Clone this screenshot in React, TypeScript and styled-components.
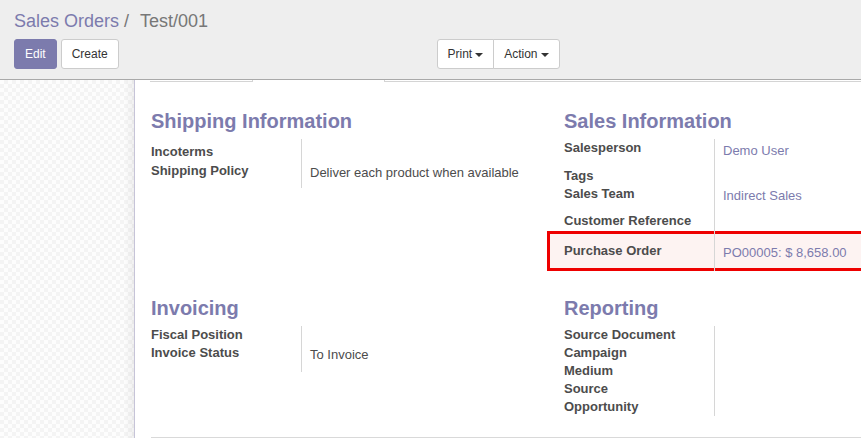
import React from "react";
import styled, { createGlobalStyle } from "styled-components";

const GlobalStyle = createGlobalStyle`
  html, body { margin: 0; padding: 0; }
  body {
    font-family: "Liberation Sans", Arial, Helvetica, sans-serif;
    font-size: 13px;
    color: #4c4c4c;
    background: #ffffff;
    overflow: hidden;
  }
  * { box-sizing: border-box; }
`;

const Page = styled.div`
  width: 861px;
  height: 438px;
  display: flex;
  flex-direction: column;
  overflow: hidden;
`;

const ControlPanel = styled.div`
  background: #eeeeee;
  border-bottom: 1px solid #a9a9a9;
  padding: 8px 0 10px 14px;
`;

const Breadcrumbs = styled.div`
  display: flex;
  align-items: baseline;
  font-size: 18px;
  line-height: 26px;
  white-space: nowrap;
`;

const Crumb = styled.span`
  color: #7c7bad;
`;

const CrumbSep = styled.span`
  color: #777777;
  margin: 0 11px 0 5px;
`;

const CrumbActive = styled.span`
  color: #777777;
`;

const CpBottom = styled.div`
  display: grid;
  grid-template-columns: 1fr 1fr;
  margin-top: 5px;
`;

const ButtonRow = styled.div`
  display: flex;
  gap: 4px;
`;

const Button = styled.button<{ $primary?: boolean }>`
  font-family: inherit;
  font-size: 12px;
  line-height: 18px;
  height: 30px;
  padding: 5px 10px;
  border-radius: 3px;
  border: 1px solid ${(p) => (p.$primary ? "#7c7bad" : "#cccccc")};
  background: ${(p) => (p.$primary ? "#7c7bad" : "#ffffff")};
  color: ${(p) => (p.$primary ? "#ffffff" : "#333333")};
  cursor: pointer;
`;

const ButtonGroup = styled.div`
  display: flex;
  margin-left: -1px;
`;

const GroupButton = styled.button`
  font-family: inherit;
  font-size: 12px;
  line-height: 18px;
  height: 30px;
  padding: 5px 10px;
  border: 1px solid #cccccc;
  background: #ffffff;
  color: #333333;
  display: flex;
  align-items: center;
  gap: 3px;
  &:first-child {
    border-radius: 3px 0 0 3px;
  }
  &:last-child {
    border-radius: 0 3px 3px 0;
    margin-left: -1px;
  }
`;

const Caret = styled.span`
  display: inline-block;
  width: 0;
  height: 0;
  border-top: 4px solid #333333;
  border-left: 4px solid transparent;
  border-right: 4px solid transparent;
  margin-top: 1px;
`;

const Main = styled.div`
  flex: 1;
  display: flex;
  min-height: 0;
`;

const Backdrop = styled.div`
  width: 134px;
  flex: none;
  background-color: #ffffff;
  background-image: repeating-conic-gradient(#f4f4f4 0 25%, #fdfdfd 0 50%);
  background-size: 8px 8px;
  position: relative;
  &::after {
    content: "";
    position: absolute;
    top: 0;
    bottom: 0;
    right: 0;
    width: 10px;
    background: linear-gradient(to right, rgba(0, 0, 0, 0), rgba(0, 0, 0, 0.05));
  }
`;

const Sheet = styled.div`
  flex: 1;
  min-width: 0;
  background: #ffffff;
  border-left: 1px solid #c6c4d8;
  overflow: hidden;
  padding: 0 0 0 16px;
`;

const TopEdge = styled.div`
  display: flex;
  height: 2px;
  margin-left: -1px;
`;

const EdgeSeg = styled.div<{ $w: number; $side: "left" | "right" }>`
  width: ${(p) => p.$w}px;
  flex: ${(p) => (p.$side === "left" ? "1 1 auto" : "none")};
  height: 2px;
  border-bottom: 1px solid #d4d4d4;
  ${(p) => (p.$side === "right" ? "border-right" : "border-left")}: 1px solid #d4d4d4;
`;

const EdgeGap = styled.div`
  width: 131px;
  flex: none;
`;

const Section = styled.div<{ $top: number }>`
  display: grid;
  grid-template-columns: 413px 413px;
  align-items: start;
  margin-top: ${(p) => p.$top}px;
`;

const Group = styled.div`
  display: flex;
  flex-direction: column;
`;

const Heading = styled.div`
  font-size: 20px;
  line-height: 24px;
  font-weight: bold;
  color: #7c7bad;
  margin-bottom: 6px;
  white-space: nowrap;
`;

const Table = styled.div`
  display: flex;
  flex-direction: column;
`;

const Row = styled.div<{ $h: number; $highlight?: boolean }>`
  display: grid;
  grid-template-columns: 150px 1fr;
  height: ${(p) => p.$h}px;
  position: relative;
  ${(p) =>
    p.$highlight
      ? `
    &::before {
      content: "";
      position: absolute;
      left: -17px;
      top: 0;
      bottom: 0;
      width: 311px;
      border: 3px solid #ee0000;
      background: #fdf3f2;
      z-index: 0;
    }
  `
      : ""}
`;

const Label = styled.div<{ $pad: number }>`
  position: relative;
  z-index: 1;
  font-weight: bold;
  line-height: 18px;
  padding-top: ${(p) => p.$pad}px;
  white-space: nowrap;
`;

const Value = styled.div<{ $pad: number; $link?: boolean }>`
  position: relative;
  z-index: 1;
  border-left: 1px solid #d6d6d6;
  padding-left: 8px;
  padding-top: ${(p) => p.$pad}px;
  line-height: 18px;
  color: ${(p) => (p.$link ? "#7c7bad" : "#4c4c4c")};
  white-space: nowrap;
`;

const BottomRule = styled.div`
  margin-top: 21px;
  border-top: 1px solid #d9d9d9;
`;

type Field = {
  label: string;
  value?: string;
  link?: boolean;
  h: number;
  lp?: number;
  vp?: number;
  highlight?: boolean;
};

const FieldGroup: React.FC<{ title: string; fields: Field[] }> = ({ title, fields }) => (
  <Group>
    <Heading>{title}</Heading>
    <Table>
      {fields.map((f) => (
        <Row key={f.label} $h={f.h} $highlight={f.highlight}>
          <Label $pad={f.lp ?? 0}>{f.label}</Label>
          <Value $pad={f.vp ?? 2} $link={f.link}>
            {f.value ?? ""}
          </Value>
        </Row>
      ))}
    </Table>
  </Group>
);

const shipping: Field[] = [
  { label: "Incoterms", h: 23, lp: 4 },
  { label: "Shipping Policy", value: "Deliver each product when available", h: 26, vp: 2 },
];

const sales: Field[] = [
  { label: "Salesperson", value: "Demo User", link: true, h: 27.5, vp: 3 },
  { label: "Tags", h: 18 },
  { label: "Sales Team", value: "Indirect Sales", link: true, h: 27, vp: 2 },
  { label: "Customer Reference", h: 19 },
  {
    label: "Purchase Order",
    value: "PO00005: $ 8,658.00",
    link: true,
    h: 40,
    lp: 11,
    vp: 13,
    highlight: true,
  },
];

const invoicing: Field[] = [
  { label: "Fiscal Position", h: 18 },
  { label: "Invoice Status", value: "To Invoice", h: 28, vp: 2 },
];

const reporting: Field[] = [
  { label: "Source Document", h: 18 },
  { label: "Campaign", h: 18 },
  { label: "Medium", h: 18 },
  { label: "Source", h: 18 },
  { label: "Opportunity", h: 18 },
];

export default function App() {
  return (
    <>
      <GlobalStyle />
      <Page>
        <ControlPanel>
          <Breadcrumbs>
            <Crumb>Sales Orders</Crumb>
            <CrumbSep>/</CrumbSep>
            <CrumbActive>Test/001</CrumbActive>
          </Breadcrumbs>
          <CpBottom>
            <ButtonRow>
              <Button $primary>Edit</Button>
              <Button>Create</Button>
            </ButtonRow>
            <ButtonGroup>
              <GroupButton>
                Print <Caret />
              </GroupButton>
              <GroupButton>
                Action <Caret />
              </GroupButton>
            </ButtonGroup>
          </CpBottom>
        </ControlPanel>
        <Main>
          <Backdrop />
          <Sheet>
            <TopEdge>
              <EdgeSeg $w={103} $side="right" />
              <EdgeGap />
              <EdgeSeg $w={476} $side="left" />
            </TopEdge>
            <Section $top={27}>
              <FieldGroup title="Shipping Information" fields={shipping} />
              <FieldGroup title="Sales Information" fields={sales} />
            </Section>
            <Section $top={25}>
              <FieldGroup title="Invoicing" fields={invoicing} />
              <FieldGroup title="Reporting" fields={reporting} />
            </Section>
            <BottomRule />
          </Sheet>
        </Main>
      </Page>
    </>
  );
}
